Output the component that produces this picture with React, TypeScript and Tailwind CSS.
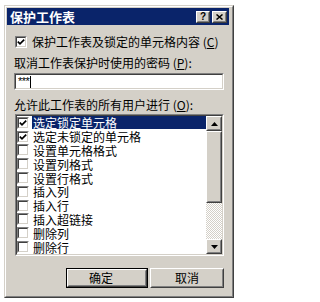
import React from "react";

function Sunken({ className = "", innerClass = "", children }: { className?: string; innerClass?: string; children?: React.ReactNode }) {
  return (
    <div className={"border border-t-[#808080] border-l-[#808080] border-r-white border-b-white " + className}>
      <div className={"h-full w-full border border-t-[#404040] border-l-[#404040] border-r-[#d4d0c8] border-b-[#d4d0c8] " + innerClass}>
        {children}
      </div>
    </div>
  );
}

function Raised({ className = "", innerClass = "", children }: { className?: string; innerClass?: string; children?: React.ReactNode }) {
  return (
    <div className={"border border-t-white border-l-white border-r-[#404040] border-b-[#404040] bg-[#d4d0c8] " + className}>
      <div className={"h-full w-full border border-t-[#d4d0c8] border-l-[#d4d0c8] border-r-[#808080] border-b-[#808080] " + innerClass}>
        {children}
      </div>
    </div>
  );
}

function Check({ checked }: { checked: boolean }) {
  return (
    <Sunken className="w-[12px] h-[12px] shrink-0" innerClass="bg-white flex items-center justify-center">
      {checked && (
        <svg width="8" height="8" viewBox="0 0 8 8">
          <polyline points="0.8,3.6 3,5.8 7.2,1.6" fill="none" stroke="#000" strokeWidth="1.7" />
        </svg>
      )}
    </Sunken>
  );
}

const items: [string, boolean][] = [
  ["选定锁定单元格", true],
  ["选定未锁定的单元格", true],
  ["设置单元格格式", false],
  ["设置列格式", false],
  ["设置行格式", false],
  ["插入列", false],
  ["插入行", false],
  ["插入超链接", false],
  ["删除列", false],
  ["删除行", false],
];

export default function App() {
  return (
    <div className="w-[254px] h-[302px] bg-white pt-[5px] pl-[4px] [font-family:'Noto_Sans_CJK_SC',sans-serif] text-[12px] text-black">
      <div className="w-[230px] h-[293px] border border-t-[#d4d0c8] border-l-[#d4d0c8] border-r-[#404040] border-b-[#404040] bg-[#d4d0c8]">
        <div className="h-full w-full border border-t-white border-l-white border-r-[#808080] border-b-[#808080] pt-[1px] pl-[1px] pr-[3px] flex flex-col">
          {/* title bar */}
          <div className="h-[17px] bg-[#0a246a] flex items-center pl-[3px] pr-[2px]">
            <span className="text-white font-bold text-[13px] leading-[15px] flex-1">保护工作表</span>
            <Raised className="w-[14px] h-[12px]" innerClass="flex items-center justify-center">
              <span className="text-[10px] font-bold leading-[10px] [font-family:'Liberation_Sans',sans-serif]">?</span>
            </Raised>
            <Raised className="w-[15px] h-[12px] ml-[2px]" innerClass="flex items-center justify-center">
              <svg width="7" height="6" viewBox="0 0 7 6">
                <path d="M0.5 0.5 L6.5 5.5 M6.5 0.5 L0.5 5.5" stroke="#000" strokeWidth="1.5" />
              </svg>
            </Raised>
          </div>

          <div className="pl-[7px] pr-[5px] flex flex-col">
            {/* row 1 */}
            <div className="mt-[10px] h-[14px] flex items-center">
              <div className="ml-[1px]"><Check checked={true} /></div>
              <span className="ml-[5px] leading-[14px]">保护工作表及锁定的单元格内容 (<span className="underline">C</span>)</span>
            </div>
            {/* row 2 */}
            <div className="mt-[7px] h-[14px] leading-[14px]">
              取消工作表保护时使用的密码 (<span className="underline">P</span>):
            </div>
            {/* input */}
            <Sunken className="mt-[3px] h-[17px] w-[210px]" innerClass="bg-white flex items-center pl-[2px]">
              <span className="leading-[11px] text-[11px] [font-family:'Liberation_Sans',sans-serif] tracking-[-0.5px]">***</span>
              <span className="ml-[1px] w-[1px] h-[12px] bg-black"></span>
            </Sunken>
            {/* row 3 */}
            <div className="mt-[8px] h-[14px] leading-[14px]">
              允许此工作表的所有用户进行 (<span className="underline">O</span>):
            </div>
            {/* list */}
            <Sunken className="mt-[2px] ml-[1px] h-[142px] w-[209px]" innerClass="bg-white flex">
              <div className="flex-1 flex flex-col overflow-hidden">
                {items.map(([label, checked], i) => (
                  <div key={label} className="h-[13.8px] shrink-0 flex items-center">
                    <Check checked={checked} />
                    <div
                      className={
                        "ml-[3px] flex-1 h-[13px] pl-[1px] leading-[13px] whitespace-nowrap " +
                        (i === 0 ? "bg-[#0a246a] text-white" : "")
                      }
                    >
                      {label}
                    </div>
                  </div>
                ))}
              </div>
              {/* scrollbar */}
              <div className="w-[16px] flex flex-col">
                <Raised className="h-[15px] shrink-0" innerClass="flex items-center justify-center">
                  <svg width="7" height="4" viewBox="0 0 7 4">
                    <path d="M3.5 0 L7 4 L0 4 Z" fill="#000" />
                  </svg>
                </Raised>
                <Raised className="h-[72px] shrink-0" />
                <div className="flex-1 bg-[repeating-conic-gradient(#d4d0c8_0_25%,#ffffff_0_50%)] [background-size:2px_2px]"></div>
                <Raised className="h-[15px] shrink-0" innerClass="flex items-center justify-center">
                  <svg width="7" height="4" viewBox="0 0 7 4">
                    <path d="M0 0 L7 0 L3.5 4 Z" fill="#000" />
                  </svg>
                </Raised>
              </div>
            </Sunken>
            {/* buttons */}
            <div className="mt-[12px] flex justify-end gap-[2px]">
              <div className="w-[82px] h-[20px] border border-black">
                <Raised className="h-full w-full" innerClass="flex items-center justify-center pr-[12px]">
                  <span className="leading-[14px]">确定</span>
                </Raised>
              </div>
              <Raised className="w-[74px] h-[20px]" innerClass="flex items-center justify-center">
                <span className="leading-[14px]">取消</span>
              </Raised>
            </div>
          </div>
        </div>
      </div>
    </div>
  );
}
